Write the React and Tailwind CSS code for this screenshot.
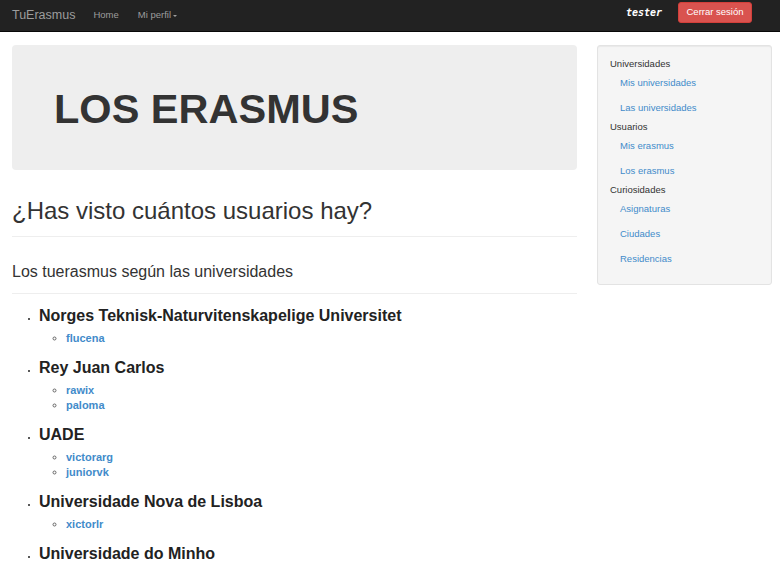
import React from 'react';

const sidebar = [
  { title: 'Universidades', links: ['Mis universidades', 'Las universidades'] },
  { title: 'Usuarios', links: ['Mis erasmus', 'Los erasmus'] },
  { title: 'Curiosidades', links: ['Asignaturas', 'Ciudades', 'Residencias'] },
];

const universidades = [
  { name: 'Norges Teknisk-Naturvitenskapelige Universitet', users: ['flucena'] },
  { name: 'Rey Juan Carlos', users: ['rawix', 'paloma'] },
  { name: 'UADE', users: ['victorarg', 'juniorvk'] },
  { name: 'Universidade Nova de Lisboa', users: ['xictorlr'] },
  { name: 'Universidade do Minho', users: [] },
];

const Navbar = () => (
  <div className="h-[32px] bg-[#222222] border-b border-[#080808] flex items-center pl-[12px] pr-[28px]">
    <span className="text-[12.5px] text-[#9d9d9d] mr-[18px]">TuErasmus</span>
    <span className="text-[9.5px] text-[#9d9d9d] mr-[19px]">Home</span>
    <span className="text-[9.5px] text-[#9d9d9d] flex items-center">
      Mi perfil
      <span className="ml-[2px] inline-block w-0 h-0 border-l-[2.5px] border-r-[2.5px] border-t-[2.5px] border-l-transparent border-r-transparent border-t-[#9d9d9d]" />
    </span>
    <div className="flex-1" />
    <span className="font-['DejaVu_Sans_Mono',monospace] italic font-bold text-[10px] text-white mr-[16px] -mt-[6px]">
      tester
    </span>
    <button className="h-[21px] w-[74px] -mt-[7px] rounded-[3px] bg-[#d9534f] border border-[#d43f3a] text-white text-[9.5px]">
      Cerrar sesión
    </button>
  </div>
);

const Sidebar = () => (
  <div className="self-start w-[175px] shrink-0 bg-[#f5f5f5] border border-[#e3e3e3] rounded-[3px] pt-[11px] pb-[13px] pl-[12px] shadow-[inset_0_1px_1px_rgba(0,0,0,0.05)]">
    {sidebar.map((s) => (
      <div key={s.title}>
        <div className="h-[13px] leading-[13px] text-[9.5px] text-[#333333]">{s.title}</div>
        {s.links.map((l) => (
          <div key={l} className="h-[25px] leading-[25px] pl-[10px] text-[9.5px] text-[#428bca]">
            {l}
          </div>
        ))}
      </div>
    ))}
  </div>
);

export default function App() {
  return (
    <div className="w-[780px] h-[572px] overflow-hidden bg-white font-['Liberation_Sans',Arial,sans-serif] text-[#333333]">
      <Navbar />
      <div className="flex gap-[20px] pl-[12px] pr-[8px] pt-[13px]">
        <div className="flex-1 min-w-0">
          <div className="h-[125px] bg-[#eeeeee] rounded-[4px] flex items-center pl-[42px]">
            <h1 className="text-[41.5px] font-bold text-[#333333] leading-none pt-[3px]">LOS ERASMUS</h1>
          </div>
          <h2 className="mt-[28px] text-[24px] leading-[26px] text-[#333333]">¿Has visto cuántos usuarios hay?</h2>
          <div className="mt-[12px] border-t border-[#eeeeee]" />
          <div className="mt-[26px] text-[16px] leading-[18px] text-[#333333]">Los tuerasmus según las universidades</div>
          <div className="mt-[12px] border-t border-[#eeeeee]" />
          <ul className="list-disc pl-[27px] text-[7px] text-[#222222]">
            {universidades.map((u) => (
              <li key={u.name}>
                <h4 className="mt-[13px] mb-[6px] text-[16px] leading-[18px] font-bold text-[#222222]">{u.name}</h4>
                {u.users.length > 0 && (
                  <ul className="list-[circle] pl-[27px] text-[#666666]">
                    {u.users.map((n) => (
                      <li key={n} className="text-[10px] leading-[15px] h-[15px]">
                        <span className="text-[11px] leading-[15px] font-bold text-[#428bca]">{n}</span>
                      </li>
                    ))}
                  </ul>
                )}
              </li>
            ))}
          </ul>
        </div>
        <Sidebar />
      </div>
    </div>
  );
}
